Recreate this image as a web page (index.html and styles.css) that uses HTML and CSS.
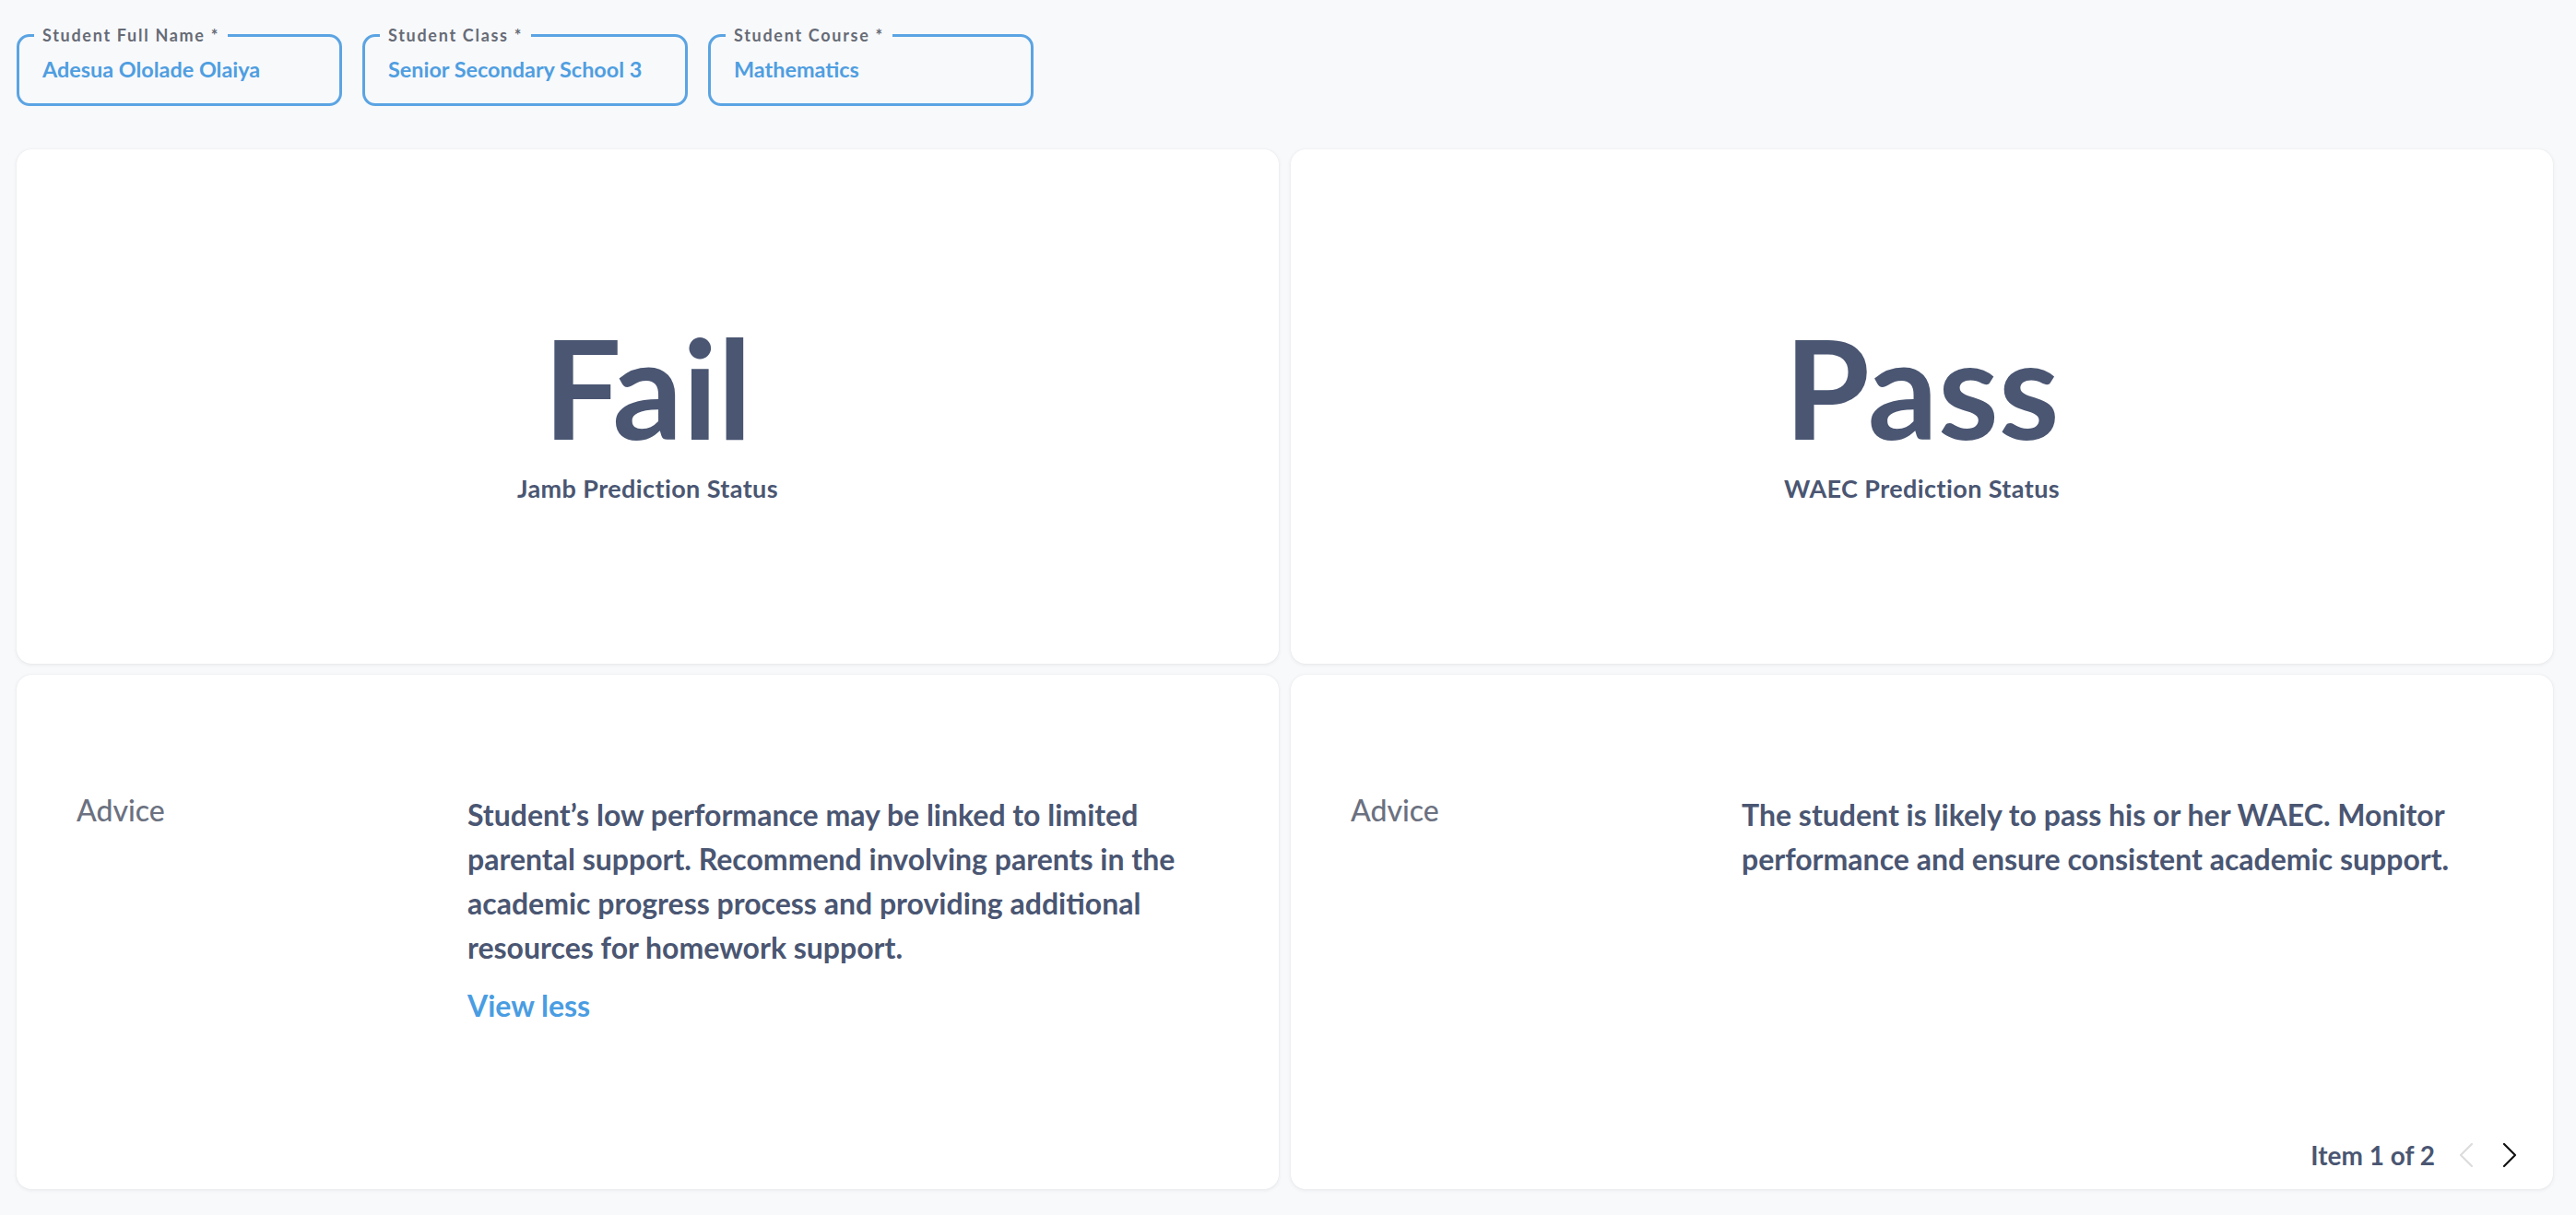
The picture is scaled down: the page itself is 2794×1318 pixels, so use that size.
FILE: index.html
```html
<!DOCTYPE html>
<html lang="en">
<head>
<meta charset="utf-8">
<title>Student Prediction</title>
<link rel="stylesheet" href="styles.css">
</head>
<body>
<main class="page">
  <section class="fields">
    <fieldset class="field">
      <legend class="field-label">Student Full Name *</legend>
      <div class="field-value">Adesua Ololade Olaiya</div>
    </fieldset>
    <fieldset class="field">
      <legend class="field-label">Student Class *</legend>
      <div class="field-value">Senior Secondary School 3</div>
    </fieldset>
    <fieldset class="field">
      <legend class="field-label">Student Course *</legend>
      <div class="field-value">Mathematics</div>
    </fieldset>
  </section>

  <section class="grid">
    <div class="card status-card">
      <div class="status-value">Fail</div>
      <div class="status-label">Jamb Prediction Status</div>
    </div>
    <div class="card status-card">
      <div class="status-value">Pass</div>
      <div class="status-label">WAEC Prediction Status</div>
    </div>
    <div class="card advice-card">
      <div class="advice-row">
        <div class="advice-label">Advice</div>
        <div class="advice-body">
          <p class="advice-text">Student’s low performance may be linked to limited parental support. Recommend involving parents in the academic progress process and providing additional resources for homework support.</p>
          <a class="view-less" href="#">View less</a>
        </div>
      </div>
    </div>
    <div class="card advice-card">
      <div class="advice-row">
        <div class="advice-label">Advice</div>
        <div class="advice-body">
          <p class="advice-text">The student is likely to pass his or her WAEC. Monitor performance and ensure consistent academic support.</p>
        </div>
      </div>
      <div class="pager">
        <span class="pager-text">Item 1 of 2</span>
        <button class="pager-btn prev" type="button" aria-label="Previous">
          <svg width="16" height="28" viewBox="0 0 16 28"><path d="M14 2 L2 14 L14 26" fill="none" stroke="currentColor" stroke-width="2.2" stroke-linecap="round" stroke-linejoin="round"/></svg>
        </button>
        <button class="pager-btn next" type="button" aria-label="Next">
          <svg width="16" height="28" viewBox="0 0 16 28"><path d="M2 2 L14 14 L2 26" fill="none" stroke="currentColor" stroke-width="2.2" stroke-linecap="round" stroke-linejoin="round"/></svg>
        </button>
      </div>
    </div>
  </section>
</main>
</body>
</html>
```

FILE: styles.css
```css
* { box-sizing: border-box; }

html, body {
  margin: 0;
  padding: 0;
  background: #f8f9fb;
  font-family: "Lato", "Noto Sans", "Liberation Sans", sans-serif;
  color: #4a5672;
}

.page {
  padding: 28px 25px 28px 18px;
}

.fields {
  display: flex;
  gap: 22px;
}

.field {
  width: 353px;
  margin: 0;
  padding: 12px 25px 23px;
  border: 3px solid #5ba4e3;
  border-radius: 14px;
  min-width: 0;
}

.field-label {
  margin-left: -9px;
  padding: 0 9px;
  font-size: 18px;
  line-height: 21px;
  font-weight: 700;
  letter-spacing: 1.7px;
  color: #666b76;
}

.field-value {
  font-size: 23.4px;
  line-height: 28px;
  font-weight: 700;
  color: #4f9ee1;
  white-space: nowrap;
}

.grid {
  margin-top: 47px;
  display: grid;
  grid-template-columns: 1fr 1fr;
  grid-template-rows: 558px 558px;
  column-gap: 13px;
  row-gap: 12px;
}

.card {
  background: #ffffff;
  border-radius: 16px;
  box-shadow: 0 1px 4px rgba(30, 41, 59, 0.09), 0 0 1px rgba(30, 41, 59, 0.08);
}

.status-card {
  display: flex;
  flex-direction: column;
  align-items: center;
  justify-content: center;
  padding-top: 7px;
}

.status-value {
  font-size: 150px;
  line-height: 150px;
  font-weight: 700;
  color: #4a5672;
}

.status-label {
  margin-top: 20px;
  font-size: 27px;
  line-height: 32px;
  font-weight: 700;
  letter-spacing: 0.4px;
  color: #4a5672;
}

.advice-card {
  display: flex;
  flex-direction: column;
  padding: 128px 27px 20px 65px;
}

.advice-row {
  display: flex;
  align-items: flex-start;
  padding-right: 38px;
}

.advice-label {
  flex: 0 0 424px;
  font-size: 32px;
  line-height: 38px;
  font-weight: 500;
  color: #6b7180;
}

.advice-body {
  flex: 1 1 auto;
  min-width: 0;
}

.advice-text {
  margin: 0;
  font-size: 32px;
  line-height: 48px;
  font-weight: 700;
  color: #4a5672;
}

.view-less {
  display: inline-block;
  margin-top: 15px;
  font-size: 32px;
  line-height: 48px;
  font-weight: 700;
  color: #4a9de2;
  text-decoration: none;
}

.pager {
  margin-top: auto;
  align-self: flex-end;
  display: flex;
  align-items: center;
}

.pager-text {
  margin-right: 14px;
  font-size: 28px;
  line-height: 34px;
  font-weight: 700;
  color: #4a5672;
}

.pager-btn {
  width: 40px;
  height: 34px;
  padding: 0;
  border: 0;
  background: transparent;
  display: flex;
  align-items: center;
  justify-content: center;
}

.pager-btn.prev { color: #dcdcdc; }
.pager-btn.next { color: #111111; margin-left: 7px; }
```
